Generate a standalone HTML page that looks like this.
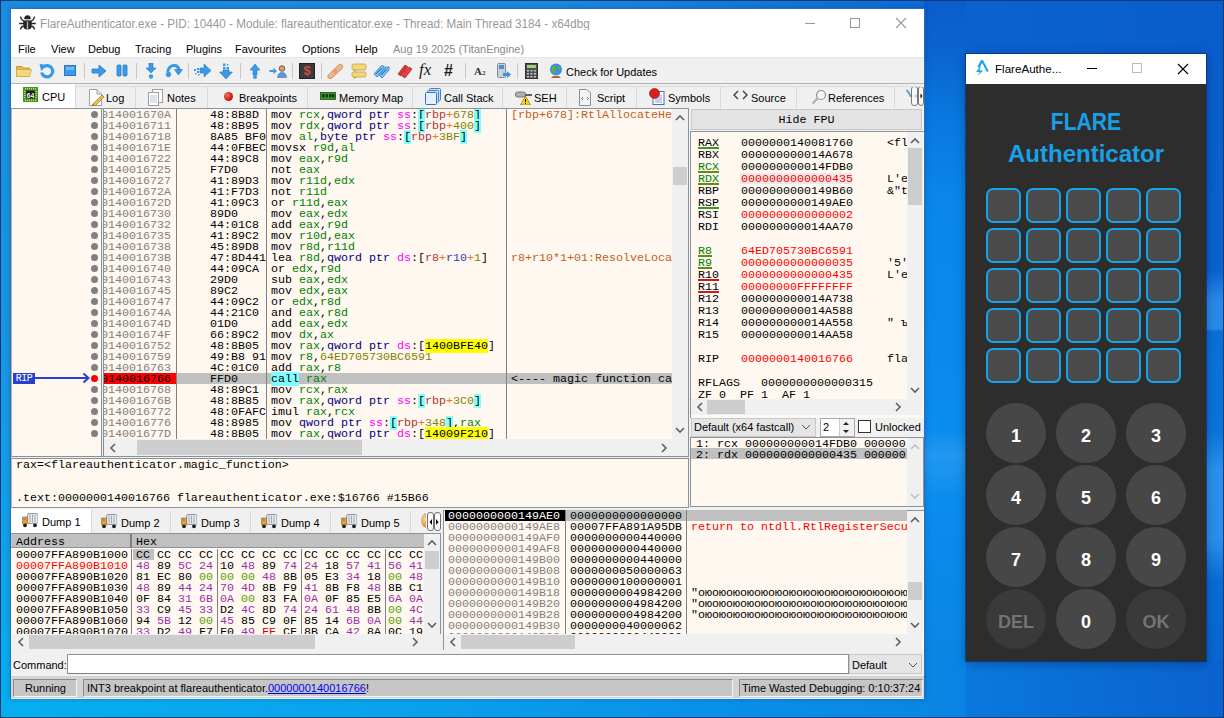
<!DOCTYPE html><html><head><meta charset="utf-8"><style>
*{margin:0;padding:0;box-sizing:border-box}
html,body{width:1224px;height:718px;overflow:hidden}
body{position:relative;background:#1479dc;font-family:"Liberation Sans",sans-serif;font-size:11px;color:#000}
.a{position:absolute}
.m{font-family:"Liberation Mono",monospace;font-size:11.67px;white-space:pre;line-height:11px}
.u{font-family:"Liberation Sans",sans-serif;font-size:11px;white-space:pre}
.row{position:absolute;left:0;height:11px;white-space:pre}
</style></head><body>
<div class="a" style="left:0;top:0;width:1224px;height:718px;background:
linear-gradient(180deg, #0a5ccc 0px, #0a64d2 50px, #0a78e0 120px, #0a86ea 200px, #0a8cee 430px, #2298f0 455px, #0a8cee 500px, #0a86e8 640px, #0a78e0 718px)"></div>
<div class="a" style="left:1206px;top:0;width:18px;height:718px;background:
linear-gradient(180deg, #0a5ccc 0px, #0a62d0 270px, #2a88e8 300px, #2a8ae8 329px, #0a70d8 331px, #0a74da 430px, #2a90ec 470px, #2a8eea 540px, #0a6cd6 580px, #0a60d0 718px)"></div>
<div class="a" style="left:966px;top:0;width:240px;height:54px;background:linear-gradient(90deg,#0a62d0,#0a5ccc)"></div>
<div class="a" style="left:966px;top:661px;width:258px;height:57px;background:linear-gradient(90deg,#0a78e0 0%,#0a6cd6 50%,#0a62d0 100%)"></div>
<div class="a" style="left:0;top:0;width:924px;height:10px;background:linear-gradient(90deg,#1a8ee2 0%,#1a8ae0 60%,#0e6ad4 100%)"></div>
<div class="a" style="left:0;top:0;width:11px;height:718px;background:linear-gradient(180deg,#1a8ce0 0%,#1896e6 50%,#08aef0 100%)"></div>
<div class="a" style="left:0;top:640px;width:966px;height:78px;background:linear-gradient(90deg,#06aef0 0%,#0aa4ee 35%,#0a92ea 70%,#0a84e4 100%)"></div>
<div class="a" style="left:0;top:0;width:1224px;height:718px;box-shadow:inset 0 0 0 1px #0a3c78"></div>
<div class="a" style="left:10px;top:8px;width:915px;height:691px;background:#f0f0f0;border:1px solid #2a70c0;box-shadow:0 0 5px rgba(0,30,80,0.25)"></div>
<div class="a" style="left:11px;top:9px;width:913px;height:29px;background:#fff"></div>
<div class="a u" style="left:40px;top:16px;font-size:11.7px;color:#999;transform:scaleY(1.1);transform-origin:0 3px">FlareAuthenticator.exe - PID: 10440 - Module: flareauthenticator.exe - Thread: Main Thread 3184 - x64dbg</div>
<svg class="a" style="left:19px;top:15px" width="17" height="15" viewBox="0 0 17 15"><g fill="#262626" stroke="#262626">
<path d="M5.2 4.2 Q5 0.5 8.5 0.2 Q12 0.5 11.8 4.2 Z" stroke="none"/>
<path d="M4.2 6.5 Q4.2 5.2 8.5 5.2 Q12.8 5.2 12.8 6.5 L12.6 12 Q12 14.5 8.5 14.5 Q5 14.5 4.4 12 Z" stroke="none"/>
<path d="M4.8 6 Q2 5 1.5 1.5 M12.2 6 Q15 5 15.5 1.5 M0.2 8.5 H16.8 M4.8 11 Q2 11.5 1.5 14.5 M12.2 11 Q15 11.5 15.5 14.5" fill="none" stroke-width="1.3"/>
<rect x="7.8" y="6.5" width="1.4" height="7.5" fill="#b8b8b8" stroke="none"/></g></svg>
<div class="a" style="left:805px;top:23px;width:10px;height:1px;background:#999"></div>
<div class="a" style="left:850px;top:18px;width:10px;height:10px;border:1px solid #999"></div>
<svg class="a" style="left:895px;top:17px" width="12" height="12"><path d="M1 1 L11 11 M11 1 L1 11" stroke="#999" stroke-width="1.1"/></svg>
<div class="a" style="left:11px;top:38px;width:913px;height:19px;background:#fff"></div>
<div class="a u" style="left:18px;top:43px">File</div>
<div class="a u" style="left:51px;top:43px">View</div>
<div class="a u" style="left:88px;top:43px">Debug</div>
<div class="a u" style="left:135px;top:43px">Tracing</div>
<div class="a u" style="left:186px;top:43px">Plugins</div>
<div class="a u" style="left:235px;top:43px">Favourites</div>
<div class="a u" style="left:302px;top:43px">Options</div>
<div class="a u" style="left:355px;top:43px">Help</div>
<div class="a u" style="left:393px;top:43px;color:#888">Aug 19 2025 (TitanEngine)</div>
<div class="a" style="left:11px;top:57px;width:913px;height:1px;background:#e6e6e6"></div>
<div class="a" style="left:11px;top:58px;width:913px;height:25px;background:#f0f0f0"></div>
<div class="a" style="left:11px;top:83px;width:913px;height:1px;background:#b4b4b4"></div>
<div class="a u" style="left:566px;top:66px">Check for Updates</div>
<svg class="a" style="left:16px;top:63px" width="16" height="16" viewBox="0 0 16 16"><path d="M0.5 3.5 H6 L7.5 5 H13.5 V13.5 H0.5 Z" fill="#e8b84a" stroke="#c89a30"/><path d="M0.5 6.5 H15.5 L13.5 13.5 H0.5 Z" fill="#f7d77a" stroke="#d0a84a" stroke-width="0.8"/></svg>
<svg class="a" style="left:39px;top:63px" width="16" height="16" viewBox="0 0 16 16"><path d="M4.2 4.2 A5.6 5.6 0 1 1 2.6 9.5" fill="none" stroke="#3a9ae6" stroke-width="3.2"/><path d="M0.5 0.8 L8 2.2 L2.2 8 Z" fill="#3a9ae6"/></svg>
<svg class="a" style="left:63px;top:63px" width="16" height="16" viewBox="0 0 16 16"><rect x="1.5" y="2.5" width="11" height="10" fill="#3a9ae6" stroke="#2a78c8"/><rect x="3" y="4" width="8" height="3" fill="#8cc8f5" opacity="0.7"/></svg>
<div class="a" style="left:84px;top:63px;width:1px;height:16px;background:#c8c8c8"></div>
<svg class="a" style="left:91px;top:63px" width="16" height="16" viewBox="0 0 16 16"><path d="M1 6 H8 V2 L15 8 L8 14 V10 H1 Z" fill="#3a9ae6" stroke="#2a78c8" stroke-width="0.8"/></svg>
<svg class="a" style="left:115px;top:63px" width="14" height="16" viewBox="0 0 14 16"><rect x="2" y="2" width="4" height="11" rx="1" fill="#3a9ae6" stroke="#2a78c8" stroke-width="0.8"/><rect x="8" y="2" width="4" height="11" rx="1" fill="#3a9ae6" stroke="#2a78c8" stroke-width="0.8"/></svg>
<div class="a" style="left:136px;top:63px;width:1px;height:16px;background:#c8c8c8"></div>
<svg class="a" style="left:143px;top:63px" width="16" height="16" viewBox="0 0 16 16"><path d="M6 0 H10 V5 H13 L8 10 L3 5 H6 Z" fill="#3a9ae6" stroke="#2a78c8" stroke-width="0.6"/><circle cx="8" cy="13.5" r="2.2" fill="#3a9ae6"/></svg>
<svg class="a" style="left:165px;top:63px" width="18" height="16" viewBox="0 0 18 16"><path d="M2.5 9 Q4 2 10 2.5 Q13.5 3 14 7" fill="none" stroke="#3a9ae6" stroke-width="3"/><path d="M9.5 6.5 H17.5 L13.5 12 Z" fill="#3a9ae6" stroke="#2a78c8" stroke-width="0.6"/><circle cx="3.5" cy="11.5" r="2.4" fill="#3a9ae6" stroke="#2a78c8" stroke-width="0.5"/></svg>
<div class="a" style="left:188px;top:63px;width:1px;height:16px;background:#c8c8c8"></div>
<svg class="a" style="left:194px;top:63px" width="18" height="16" viewBox="0 0 18 16"><path d="M6 5 H10 V1 L17 7.5 L10 14 V10 H6 Z" fill="#3a9ae6" stroke="#2a78c8" stroke-width="0.6"/><g fill="#3a9ae6"><rect x="3" y="5" width="2" height="2"/><rect x="3" y="8" width="2" height="2"/><rect x="0" y="6" width="2" height="2"/><rect x="1" y="10" width="1.5" height="1.5"/><rect x="4" y="11" width="1.5" height="1.5"/></g></svg>
<svg class="a" style="left:218px;top:63px" width="16" height="17" viewBox="0 0 16 17"><path d="M5 7 V9 H1.5 L8 16 L14.5 9 H11 V7 Z" fill="#3a9ae6" stroke="#2a78c8" stroke-width="0.6"/><g fill="#3a9ae6"><rect x="5" y="4" width="2.5" height="2.5"/><rect x="8.5" y="4" width="2.5" height="2.5"/><rect x="5" y="0.5" width="2.5" height="2.5"/><rect x="9" y="1" width="1.5" height="1.5"/></g></svg>
<div class="a" style="left:240px;top:63px;width:1px;height:16px;background:#c8c8c8"></div>
<svg class="a" style="left:247px;top:63px" width="16" height="16" viewBox="0 0 16 16"><path d="M6 12 V7 H3 L8 1 L13 7 H10 V12 Z" fill="#3a9ae6" stroke="#2a78c8" stroke-width="0.6"/><circle cx="8" cy="14" r="2" fill="#3a9ae6"/></svg>
<svg class="a" style="left:269px;top:63px" width="18" height="16" viewBox="0 0 18 16"><path d="M0.5 7 H4.5 V4.8 L8 8 L4.5 11.2 V9 H0.5 Z" fill="#3a9ae6"/><circle cx="13" cy="5.5" r="2.8" fill="#d8a070" stroke="#604020" stroke-width="0.8"/><path d="M8.5 14.5 Q9 9.5 13 9.5 Q17 9.5 17.5 14.5 Z" fill="#5a9ae0" stroke="#3a70b0" stroke-width="0.6"/></svg>
<div class="a" style="left:292px;top:63px;width:1px;height:16px;background:#c8c8c8"></div>
<div class="a" style="left:299px;top:63px;width:16px;height:16px;background:#3a3a3a;border:1px solid #222"></div>
<div class="a" style="left:299px;top:63px;width:16px;height:16px;color:#d04848;font:bold 13px 'Liberation Sans';line-height:16px;text-align:center">$</div>
<div class="a" style="left:321px;top:63px;width:1px;height:16px;background:#c8c8c8"></div>
<svg class="a" style="left:327px;top:63px" width="17" height="16" viewBox="0 0 17 16"><path d="M1.5 12 L11.5 2 Q13.5 0.5 15 2 Q16.5 3.5 15 5.5 L5 15 Q3 16.5 1.5 15 Q0 13.5 1.5 12 Z" fill="#f0b888" stroke="#c08050" stroke-width="0.8"/><rect x="6" y="6" width="5" height="5" transform="rotate(45 8.5 8.5)" fill="#e8a070"/></svg>
<svg class="a" style="left:351px;top:63px" width="16" height="16" viewBox="0 0 16 16"><rect x="1" y="1" width="14" height="6" rx="1.5" fill="#f5d878" stroke="#c0a040" stroke-width="0.8"/><rect x="1" y="9" width="14" height="5" rx="1.5" fill="#f5d878" stroke="#c0a040" stroke-width="0.8"/><path d="M3 7 L3 9 L6 7 Z" fill="#c0a040"/><path d="M3 14 L3 16 L6 14 Z" fill="#c0a040"/></svg>
<svg class="a" style="left:373px;top:63px" width="17" height="16" viewBox="0 0 17 16"><path d="M1 11 L8 3 L11 3 L11 6 L4 14 Z" fill="#8cc8f5" stroke="#3a7ac0" stroke-width="0.9"/><path d="M6 12 L13 4 L16 4 L16 7 L9 15 Z" fill="#8cc8f5" stroke="#3a7ac0" stroke-width="0.9"/><path d="M3 11 L9 5 M8 12 L14 6" stroke="#2a80d0" stroke-width="1.2"/></svg>
<svg class="a" style="left:397px;top:63px" width="17" height="16" viewBox="0 0 17 16"><path d="M1 11 L8 2 L11 4 L4 13 Z" fill="#e03030" stroke="#a01818" stroke-width="0.7"/><path d="M5 13 L12 4 L15 6 L8 15 Z" fill="#e84040" stroke="#a01818" stroke-width="0.7"/></svg>
<div class="a" style="left:419px;top:61px;font:italic 17px 'Liberation Serif';color:#222;line-height:18px">fx</div>
<div class="a" style="left:444px;top:62px;font:bold 16px 'Liberation Sans';color:#222;line-height:18px">#</div>
<div class="a" style="left:465px;top:63px;width:1px;height:16px;background:#c8c8c8"></div>
<div class="a" style="left:474px;top:64px;font:bold 11px 'Liberation Serif';color:#333;line-height:14px">A<span style="font-size:7px">2</span></div>
<svg class="a" style="left:496px;top:63px" width="16" height="16" viewBox="0 0 16 16"><rect x="1.5" y="0.5" width="8" height="14" rx="1" fill="#c8d0d8" stroke="#707880" stroke-width="0.8"/><rect x="3" y="2" width="5" height="4" fill="#4a90d0"/><path d="M7 10 H11 V8 L15 11.5 L11 15 V13 H7 Z" fill="#3a90e0"/></svg>
<div class="a" style="left:517px;top:63px;width:1px;height:16px;background:#c8c8c8"></div>
<svg class="a" style="left:525px;top:63px" width="13" height="16" viewBox="0 0 13 16"><rect x="0.5" y="0.5" width="12" height="15" fill="#505050" stroke="#303030"/><rect x="2" y="2" width="9" height="3" fill="#a0d080"/><g fill="#c8c8c8"><rect x="2" y="7" width="2" height="1.5"/><rect x="5.5" y="7" width="2" height="1.5"/><rect x="9" y="7" width="2" height="1.5"/><rect x="2" y="10" width="2" height="1.5"/><rect x="5.5" y="10" width="2" height="1.5"/><rect x="9" y="10" width="2" height="1.5"/><rect x="2" y="13" width="2" height="1.5"/><rect x="5.5" y="13" width="2" height="1.5"/><rect x="9" y="13" width="2" height="1.5"/></g></svg>
<svg class="a" style="left:548px;top:63px" width="16" height="16" viewBox="0 0 16 16"><circle cx="8" cy="6.5" r="6" fill="#3a90e0"/><path d="M4 3 Q7 2 8 5 Q6 8 9 10 Q6 11 4 9 Z M10 2 Q13 4 12 7 Q10 6 10 2 Z" fill="#60b040"/><path d="M3 15 H13 L11 13 H5 Z" fill="#c06030"/></svg>
<div class="a" style="left:11px;top:84px;width:913px;height:24px;background:#f0f0f0"></div>
<div class="a" style="left:11px;top:108px;width:678px;height:348px;background:#fff8f0;border-top:1px solid #8c939b;border-right:1px solid #8c939b;border-left:1px solid #b4b4b4"></div>
<div class="a" style="left:104px;top:373px;width:568px;height:11px;background:#c0c0c0"></div>
<div class="a" style="left:104px;top:373px;width:72px;height:11px;background:#ff0000"></div>
<div class="a" style="left:101px;top:109px;width:1px;height:347px;background:#8a9098"></div>
<div class="a" style="left:103px;top:109px;width:1px;height:347px;background:#8a9098"></div>
<div class="a" style="left:176px;top:109px;width:1px;height:330px;background:#808080"></div>
<div class="a" style="left:266px;top:109px;width:1px;height:330px;background:#808080"></div>
<div class="a" style="left:506px;top:109px;width:1px;height:330px;background:#808080"></div>
<div class="a m" style="left:104px;top:109px;width:72px;height:330px;overflow:hidden">
<div class="row" style="top:1px;left:-45px;color:#808080">000000014001670A</div>
<div class="row" style="top:12px;left:-45px;color:#808080">0000000140016711</div>
<div class="row" style="top:23px;left:-45px;color:#808080">0000000140016718</div>
<div class="row" style="top:34px;left:-45px;color:#808080">000000014001671E</div>
<div class="row" style="top:45px;left:-45px;color:#808080">0000000140016722</div>
<div class="row" style="top:56px;left:-45px;color:#808080">0000000140016725</div>
<div class="row" style="top:67px;left:-45px;color:#808080">0000000140016727</div>
<div class="row" style="top:78px;left:-45px;color:#808080">000000014001672A</div>
<div class="row" style="top:89px;left:-45px;color:#808080">000000014001672D</div>
<div class="row" style="top:100px;left:-45px;color:#808080">0000000140016730</div>
<div class="row" style="top:111px;left:-45px;color:#808080">0000000140016732</div>
<div class="row" style="top:122px;left:-45px;color:#808080">0000000140016735</div>
<div class="row" style="top:133px;left:-45px;color:#808080">0000000140016738</div>
<div class="row" style="top:144px;left:-45px;color:#808080">000000014001673B</div>
<div class="row" style="top:155px;left:-45px;color:#808080">0000000140016740</div>
<div class="row" style="top:166px;left:-45px;color:#808080">0000000140016743</div>
<div class="row" style="top:177px;left:-45px;color:#808080">0000000140016745</div>
<div class="row" style="top:188px;left:-45px;color:#808080">0000000140016747</div>
<div class="row" style="top:199px;left:-45px;color:#808080">000000014001674A</div>
<div class="row" style="top:210px;left:-45px;color:#808080">000000014001674D</div>
<div class="row" style="top:221px;left:-45px;color:#808080">000000014001674F</div>
<div class="row" style="top:232px;left:-45px;color:#808080">0000000140016752</div>
<div class="row" style="top:243px;left:-45px;color:#808080">0000000140016759</div>
<div class="row" style="top:254px;left:-45px;color:#808080">0000000140016763</div>
<div class="row" style="top:265px;left:-45px;color:#000">0000000140016766</div>
<div class="row" style="top:276px;left:-45px;color:#808080">0000000140016768</div>
<div class="row" style="top:287px;left:-45px;color:#808080">000000014001676B</div>
<div class="row" style="top:298px;left:-45px;color:#808080">0000000140016772</div>
<div class="row" style="top:309px;left:-45px;color:#808080">0000000140016776</div>
<div class="row" style="top:320px;left:-45px;color:#808080">000000014001677D</div>
</div>
<div class="a m" style="left:177px;top:109px;width:89px;height:330px;overflow:hidden">
<div class="row" style="top:1px;left:33px">48:8B8D</div>
<div class="row" style="top:12px;left:33px">48:8B95 (</div>
<div class="row" style="top:23px;left:33px">8A85 BF05</div>
<div class="row" style="top:34px;left:33px">44:0FBEC8</div>
<div class="row" style="top:45px;left:33px">44:89C8</div>
<div class="row" style="top:56px;left:33px">F7D0</div>
<div class="row" style="top:67px;left:33px">41:89D3</div>
<div class="row" style="top:78px;left:33px">41:F7D3</div>
<div class="row" style="top:89px;left:33px">41:09C3</div>
<div class="row" style="top:100px;left:33px">89D0</div>
<div class="row" style="top:111px;left:33px">44:01C8</div>
<div class="row" style="top:122px;left:33px">41:89C2</div>
<div class="row" style="top:133px;left:33px">45:89D8</div>
<div class="row" style="top:144px;left:33px">47:8D4410</div>
<div class="row" style="top:155px;left:33px">44:09CA</div>
<div class="row" style="top:166px;left:33px">29D0</div>
<div class="row" style="top:177px;left:33px">89C2</div>
<div class="row" style="top:188px;left:33px">44:09C2</div>
<div class="row" style="top:199px;left:33px">44:21C0</div>
<div class="row" style="top:210px;left:33px">01D0</div>
<div class="row" style="top:221px;left:33px">66:89C2</div>
<div class="row" style="top:232px;left:33px">48:8B05</div>
<div class="row" style="top:243px;left:33px">49:B8 91</div>
<div class="row" style="top:254px;left:33px">4C:01C0</div>
<div class="row" style="top:265px;left:33px">FFD0</div>
<div class="row" style="top:276px;left:33px">48:89C1</div>
<div class="row" style="top:287px;left:33px">48:8B85 (</div>
<div class="row" style="top:298px;left:33px">48:0FAFC1</div>
<div class="row" style="top:309px;left:33px">48:8985</div>
<div class="row" style="top:320px;left:33px">48:8B05</div>
</div>
<div class="a m" style="left:267px;top:109px;width:239px;height:330px;overflow:hidden">
<div class="row" style="top:1px;left:4px">mov <span style="color:#008000;">rcx</span>,<span style="color:#000080;">qword ptr </span><span style="color:#ff00ff;">ss</span>:<span style="color:#000000;background:#80ffff;">[</span><span style="color:#b03434;">rbp</span><span style="color:#f27711;">+</span><span style="color:#828200;">678</span><span style="color:#000000;background:#80ffff;">]</span></div>
<div class="row" style="top:12px;left:4px">mov <span style="color:#008000;">rdx</span>,<span style="color:#000080;">qword ptr </span><span style="color:#ff00ff;">ss</span>:<span style="color:#000000;background:#80ffff;">[</span><span style="color:#b03434;">rbp</span><span style="color:#f27711;">+</span><span style="color:#828200;">400</span><span style="color:#000000;background:#80ffff;">]</span></div>
<div class="row" style="top:23px;left:4px">mov <span style="color:#008000;">al</span>,<span style="color:#000080;">byte ptr </span><span style="color:#ff00ff;">ss</span>:<span style="color:#000000;background:#80ffff;">[</span><span style="color:#b03434;">rbp</span><span style="color:#f27711;">+</span><span style="color:#828200;">3BF</span><span style="color:#000000;background:#80ffff;">]</span></div>
<div class="row" style="top:34px;left:4px">movsx <span style="color:#008000;">r9d</span>,<span style="color:#008000;">al</span></div>
<div class="row" style="top:45px;left:4px">mov <span style="color:#008000;">eax</span>,<span style="color:#008000;">r9d</span></div>
<div class="row" style="top:56px;left:4px">not <span style="color:#008000;">eax</span></div>
<div class="row" style="top:67px;left:4px">mov <span style="color:#008000;">r11d</span>,<span style="color:#008000;">edx</span></div>
<div class="row" style="top:78px;left:4px">not <span style="color:#008000;">r11d</span></div>
<div class="row" style="top:89px;left:4px">or <span style="color:#008000;">r11d</span>,<span style="color:#008000;">eax</span></div>
<div class="row" style="top:100px;left:4px">mov <span style="color:#008000;">eax</span>,<span style="color:#008000;">edx</span></div>
<div class="row" style="top:111px;left:4px">add <span style="color:#008000;">eax</span>,<span style="color:#008000;">r9d</span></div>
<div class="row" style="top:122px;left:4px">mov <span style="color:#008000;">r10d</span>,<span style="color:#008000;">eax</span></div>
<div class="row" style="top:133px;left:4px">mov <span style="color:#008000;">r8d</span>,<span style="color:#008000;">r11d</span></div>
<div class="row" style="top:144px;left:4px">lea <span style="color:#008000;">r8d</span>,<span style="color:#000080;">qword ptr </span><span style="color:#ff00ff;">ds</span>:<span style="color:#000000;">[</span><span style="color:#b03434;">r8</span><span style="color:#f27711;">+</span><span style="color:#3838bc;">r10</span><span style="color:#f27711;">+</span><span style="color:#828200;">1</span><span style="color:#000000;">]</span></div>
<div class="row" style="top:155px;left:4px">or <span style="color:#008000;">edx</span>,<span style="color:#008000;">r9d</span></div>
<div class="row" style="top:166px;left:4px">sub <span style="color:#008000;">eax</span>,<span style="color:#008000;">edx</span></div>
<div class="row" style="top:177px;left:4px">mov <span style="color:#008000;">edx</span>,<span style="color:#008000;">eax</span></div>
<div class="row" style="top:188px;left:4px">or <span style="color:#008000;">edx</span>,<span style="color:#008000;">r8d</span></div>
<div class="row" style="top:199px;left:4px">and <span style="color:#008000;">eax</span>,<span style="color:#008000;">r8d</span></div>
<div class="row" style="top:210px;left:4px">add <span style="color:#008000;">eax</span>,<span style="color:#008000;">edx</span></div>
<div class="row" style="top:221px;left:4px">mov <span style="color:#008000;">dx</span>,<span style="color:#008000;">ax</span></div>
<div class="row" style="top:232px;left:4px">mov <span style="color:#008000;">rax</span>,<span style="color:#000080;">qword ptr </span><span style="color:#ff00ff;">ds</span>:<span style="color:#000000;">[</span><span style="color:#000;background:#ffff00;">1400BFE40</span><span style="color:#000000;">]</span></div>
<div class="row" style="top:243px;left:4px">mov <span style="color:#008000;">r8</span>,<span style="color:#828200;">64ED705730BC6591</span></div>
<div class="row" style="top:254px;left:4px">add <span style="color:#008000;">rax</span>,<span style="color:#008000;">r8</span></div>
<div class="row" style="top:265px;left:4px"><span style="color:#000;background:#80ffff;">call</span> <span style="color:#008000;">rax</span></div>
<div class="row" style="top:276px;left:4px">mov <span style="color:#008000;">rcx</span>,<span style="color:#008000;">rax</span></div>
<div class="row" style="top:287px;left:4px">mov <span style="color:#008000;">rax</span>,<span style="color:#000080;">qword ptr </span><span style="color:#ff00ff;">ss</span>:<span style="color:#000000;background:#80ffff;">[</span><span style="color:#b03434;">rbp</span><span style="color:#f27711;">+</span><span style="color:#828200;">3C0</span><span style="color:#000000;background:#80ffff;">]</span></div>
<div class="row" style="top:298px;left:4px">imul <span style="color:#008000;">rax</span>,<span style="color:#008000;">rcx</span></div>
<div class="row" style="top:309px;left:4px">mov <span style="color:#000080;">qword ptr </span><span style="color:#ff00ff;">ss</span>:<span style="color:#000000;background:#80ffff;">[</span><span style="color:#b03434;">rbp</span><span style="color:#f27711;">+</span><span style="color:#828200;">348</span><span style="color:#000000;background:#80ffff;">]</span>,<span style="color:#008000;">rax</span></div>
<div class="row" style="top:320px;left:4px">mov <span style="color:#008000;">rax</span>,<span style="color:#000080;">qword ptr </span><span style="color:#ff00ff;">ds</span>:<span style="color:#000000;">[</span><span style="color:#000;background:#ffff00;">14009F210</span><span style="color:#000000;">]</span></div>
</div>
<div class="a m" style="left:507px;top:109px;width:165px;height:330px;overflow:hidden">
<div class="row" style="top:1px;left:4px;color:#c0601e">[rbp+678]:RtlAllocateHe</div>
<div class="row" style="top:144px;left:4px;color:#c0601e">r8+r10*1+01:ResolveLoca</div>
<div class="row" style="top:265px;left:4px;color:#000">&lt;---- magic function ca</div>
</div>
<div class="a" style="left:91px;top:111px;width:7px;height:7px;border-radius:50%;background:#808080"></div>
<div class="a" style="left:91px;top:122px;width:7px;height:7px;border-radius:50%;background:#808080"></div>
<div class="a" style="left:91px;top:133px;width:7px;height:7px;border-radius:50%;background:#808080"></div>
<div class="a" style="left:91px;top:144px;width:7px;height:7px;border-radius:50%;background:#808080"></div>
<div class="a" style="left:91px;top:155px;width:7px;height:7px;border-radius:50%;background:#808080"></div>
<div class="a" style="left:91px;top:166px;width:7px;height:7px;border-radius:50%;background:#808080"></div>
<div class="a" style="left:91px;top:177px;width:7px;height:7px;border-radius:50%;background:#808080"></div>
<div class="a" style="left:91px;top:188px;width:7px;height:7px;border-radius:50%;background:#808080"></div>
<div class="a" style="left:91px;top:199px;width:7px;height:7px;border-radius:50%;background:#808080"></div>
<div class="a" style="left:91px;top:210px;width:7px;height:7px;border-radius:50%;background:#808080"></div>
<div class="a" style="left:91px;top:221px;width:7px;height:7px;border-radius:50%;background:#808080"></div>
<div class="a" style="left:91px;top:232px;width:7px;height:7px;border-radius:50%;background:#808080"></div>
<div class="a" style="left:91px;top:243px;width:7px;height:7px;border-radius:50%;background:#808080"></div>
<div class="a" style="left:91px;top:254px;width:7px;height:7px;border-radius:50%;background:#808080"></div>
<div class="a" style="left:91px;top:265px;width:7px;height:7px;border-radius:50%;background:#808080"></div>
<div class="a" style="left:91px;top:276px;width:7px;height:7px;border-radius:50%;background:#808080"></div>
<div class="a" style="left:91px;top:287px;width:7px;height:7px;border-radius:50%;background:#808080"></div>
<div class="a" style="left:91px;top:298px;width:7px;height:7px;border-radius:50%;background:#808080"></div>
<div class="a" style="left:91px;top:309px;width:7px;height:7px;border-radius:50%;background:#808080"></div>
<div class="a" style="left:91px;top:320px;width:7px;height:7px;border-radius:50%;background:#808080"></div>
<div class="a" style="left:91px;top:331px;width:7px;height:7px;border-radius:50%;background:#808080"></div>
<div class="a" style="left:91px;top:342px;width:7px;height:7px;border-radius:50%;background:#808080"></div>
<div class="a" style="left:91px;top:353px;width:7px;height:7px;border-radius:50%;background:#808080"></div>
<div class="a" style="left:91px;top:364px;width:7px;height:7px;border-radius:50%;background:#808080"></div>
<div class="a" style="left:91px;top:375px;width:7px;height:7px;border-radius:50%;background:#ff0000"></div>
<div class="a" style="left:91px;top:386px;width:7px;height:7px;border-radius:50%;background:#808080"></div>
<div class="a" style="left:91px;top:397px;width:7px;height:7px;border-radius:50%;background:#808080"></div>
<div class="a" style="left:91px;top:408px;width:7px;height:7px;border-radius:50%;background:#808080"></div>
<div class="a" style="left:91px;top:419px;width:7px;height:7px;border-radius:50%;background:#808080"></div>
<div class="a" style="left:91px;top:430px;width:7px;height:7px;border-radius:50%;background:#808080"></div>
<div class="a m" style="left:13px;top:373px;width:22px;height:11px;background:#2a3fcf;color:#fff;font-size:10px;line-height:11px;text-align:center;letter-spacing:-0.5px">RIP</div>
<div class="a" style="left:35px;top:377px;width:53px;height:2px;background:#2a3fcf"></div>
<svg class="a" style="left:82px;top:372px" width="8" height="12"><path d="M1.5 1.5 L6.5 6 L1.5 10.5" fill="none" stroke="#2a3fcf" stroke-width="2"/></svg>
<div class="a" style="left:672px;top:109px;width:16px;height:330px;background:#f0f0f0"></div>
<div class="a" style="left:673px;top:167px;width:14px;height:18px;background:#cdcdcd"></div>
<svg class="a" style="left:675px;top:114px" width="10" height="8"><path d="M1 6 L5 2 L9 6" fill="none" stroke="#606060" stroke-width="1.6"/></svg>
<svg class="a" style="left:675px;top:426px" width="10" height="8"><path d="M1 2 L5 6 L9 2" fill="none" stroke="#606060" stroke-width="1.6"/></svg>
<div class="a" style="left:104px;top:439px;width:584px;height:17px;background:#f0f0f0"></div>
<div class="a" style="left:137px;top:440px;width:225px;height:15px;background:#cdcdcd"></div>
<svg class="a" style="left:109px;top:443px" width="8" height="10"><path d="M6 1 L2 5 L6 9" fill="none" stroke="#606060" stroke-width="1.6"/></svg>
<svg class="a" style="left:660px;top:443px" width="8" height="10"><path d="M2 1 L6 5 L2 9" fill="none" stroke="#606060" stroke-width="1.6"/></svg>
<div class="a" style="left:11px;top:456px;width:678px;height:1px;background:#8a9098"></div>
<div class="a" style="left:102px;top:109px;width:1px;height:347px;background:#f0f0f0"></div>
<div class="a" style="left:691px;top:109px;width:231px;height:21px;background:#e3e3e3;border:1px solid #c8c8c8"></div>
<div class="a m" style="left:691px;top:110px;width:231px;height:21px;line-height:21px;text-align:center">Hide FPU</div>
<div class="a" style="left:690px;top:131px;width:234px;height:287px;background:#fff8f0;border-top:1px solid #8c939b;border-left:1px solid #8c939b"></div>
<div class="a" style="left:11px;top:458px;width:678px;height:50px;background:#fff8f0;border-top:1px solid #8a9098;border-right:1px solid #8c939b;border-bottom:1px solid #8c939b;border-left:1px solid #b4b4b4"></div>
<div class="a" style="left:11px;top:457px;width:678px;height:1px;background:#f0f0f0"></div>
<div class="a" style="left:690px;top:437px;width:234px;height:70px;background:#fff8f0;border:1px solid #8c939b"></div>
<div class="a" style="left:11px;top:533px;width:430px;height:117px;background:#fff8f0;border-top:1px solid #8c939b;border-right:1px solid #8c939b"></div>
<div class="a" style="left:443px;top:510px;width:481px;height:140px;background:#fff8f0;border-top:1px solid #8c939b;border-left:1px solid #8c939b"></div>
<div class="a" style="left:135px;top:86px;width:1px;height:22px;background:#d9d9d9"></div>
<div class="a" style="left:207px;top:86px;width:1px;height:22px;background:#d9d9d9"></div>
<div class="a" style="left:307px;top:86px;width:1px;height:22px;background:#d9d9d9"></div>
<div class="a" style="left:412px;top:86px;width:1px;height:22px;background:#d9d9d9"></div>
<div class="a" style="left:502px;top:86px;width:1px;height:22px;background:#d9d9d9"></div>
<div class="a" style="left:566px;top:86px;width:1px;height:22px;background:#d9d9d9"></div>
<div class="a" style="left:636px;top:86px;width:1px;height:22px;background:#d9d9d9"></div>
<div class="a" style="left:720px;top:86px;width:1px;height:22px;background:#d9d9d9"></div>
<div class="a" style="left:796px;top:86px;width:1px;height:22px;background:#d9d9d9"></div>
<div class="a" style="left:894px;top:86px;width:1px;height:22px;background:#d9d9d9"></div>
<div class="a" style="left:11px;top:84px;width:65px;height:24px;background:#fff;border-right:1px solid #d9d9d9"></div>
<svg class="a" style="left:23px;top:87px" width="15" height="15" viewBox="0 0 15 15"><rect x="0" y="0" width="15" height="15" fill="#3a9a28"/><g fill="#e8d050"><rect x="2" y="1" width="1" height="1.5"/><rect x="4" y="1" width="1" height="1.5"/><rect x="6" y="1" width="1" height="1.5"/><rect x="8" y="1" width="1" height="1.5"/><rect x="10" y="1" width="1" height="1.5"/><rect x="12" y="1" width="1" height="1.5"/><rect x="2" y="12.5" width="1" height="1.5"/><rect x="4" y="12.5" width="1" height="1.5"/><rect x="6" y="12.5" width="1" height="1.5"/><rect x="8" y="12.5" width="1" height="1.5"/><rect x="10" y="12.5" width="1" height="1.5"/><rect x="12" y="12.5" width="1" height="1.5"/><rect x="1" y="4" width="1.5" height="1"/><rect x="1" y="6" width="1.5" height="1"/><rect x="1" y="8" width="1.5" height="1"/><rect x="1" y="10" width="1.5" height="1"/><rect x="12.5" y="4" width="1.5" height="1"/><rect x="12.5" y="6" width="1.5" height="1"/><rect x="12.5" y="8" width="1.5" height="1"/><rect x="12.5" y="10" width="1.5" height="1"/></g><rect x="3" y="3.5" width="9" height="8" rx="1" fill="#1e1e1e"/><text x="7.5" y="10.5" font-family="Liberation Sans" font-weight="bold" font-size="7" fill="#f0f0f0" text-anchor="middle">64</text></svg>
<div class="a u" style="left:42px;top:91px">CPU</div>
<div class="a u" style="left:106px;top:92px">Log</div>
<div class="a u" style="left:167px;top:92px">Notes</div>
<div class="a u" style="left:239px;top:92px">Breakpoints</div>
<div class="a u" style="left:339px;top:92px">Memory Map</div>
<div class="a u" style="left:444px;top:92px">Call Stack</div>
<div class="a u" style="left:534px;top:92px">SEH</div>
<div class="a u" style="left:597px;top:92px">Script</div>
<div class="a u" style="left:668px;top:92px">Symbols</div>
<div class="a u" style="left:751px;top:92px">Source</div>
<div class="a u" style="left:828px;top:92px">References</div>
<svg class="a" style="left:88px;top:89px" width="16" height="17" viewBox="0 0 16 17"><path d="M1.5 0.5 H9 L13.5 5 V16.5 H1.5 Z" fill="#fff" stroke="#9aa0a8"/><path d="M9 0.5 V5 H13.5" fill="#e8e8e8" stroke="#9aa0a8"/><path d="M5 15 L14 6 L16 8 L7 17 L4 17 Z" fill="#f0c040" stroke="#806020" stroke-width="0.6"/><path d="M4 17 L5 15 L6.5 16.5 Z" fill="#d03030"/></svg>
<svg class="a" style="left:148px;top:89px" width="16" height="17" viewBox="0 0 16 17"><rect x="4.5" y="0.5" width="10" height="13" fill="#fff" stroke="#9aa0a8"/><rect x="0.5" y="3.5" width="10" height="13" fill="#fff" stroke="#9aa0a8"/><g stroke="#a8b8c8" stroke-width="0.8"><path d="M2 7 H9 M2 9 H9 M2 11 H9 M2 13 H9"/></g></svg>
<div class="a" style="left:224px;top:92px;width:9px;height:9px;border-radius:50%;background:radial-gradient(circle at 35% 35%,#f07060,#c82010 60%,#901000)"></div>
<svg class="a" style="left:320px;top:92px" width="16" height="9" viewBox="0 0 16 9"><rect x="0.5" y="0.5" width="15" height="7" fill="#3a9a30" stroke="#1a5010" stroke-width="0.8"/><g fill="#1a3a10"><rect x="2" y="2" width="2.5" height="3.5"/><rect x="5.5" y="2" width="2.5" height="3.5"/><rect x="9" y="2" width="2.5" height="3.5"/><rect x="12" y="2" width="2.5" height="3.5"/></g></svg>
<svg class="a" style="left:425px;top:88px" width="16" height="17" viewBox="0 0 16 17"><rect x="4.5" y="0.5" width="11" height="12" rx="1" fill="#c8e0f8" stroke="#4a80c0"/><rect x="2.5" y="2.5" width="11" height="12" rx="1" fill="#c8e0f8" stroke="#4a80c0"/><rect x="0.5" y="4.5" width="11" height="12" rx="1" fill="#e0f0ff" stroke="#3a70b0"/></svg>
<svg class="a" style="left:515px;top:90px" width="17" height="15" viewBox="0 0 17 15"><rect x="0.5" y="2" width="10" height="5" rx="2" fill="#b0b0b0" stroke="#606060" stroke-width="0.8"/><path d="M10 5 L17 5" stroke="#606060" stroke-width="2"/><path d="M10.5 6 L15.5 15 H5.5 Z" fill="#f8d020" stroke="#907000" stroke-width="0.7"/><rect x="10" y="9" width="1" height="3" fill="#000"/><rect x="10" y="13" width="1" height="1" fill="#000"/></svg>
<svg class="a" style="left:578px;top:89px" width="14" height="17" viewBox="0 0 14 17"><path d="M1.5 0.5 H9 L12.5 4 V16.5 H1.5 Z" fill="#f4f4f4" stroke="#8a9098"/><path d="M5 8 L3.5 9.5 L5 11 M9 8 L10.5 9.5 L9 11" fill="none" stroke="#606870" stroke-width="0.9"/></svg>
<svg class="a" style="left:649px;top:88px" width="16" height="17" viewBox="0 0 16 17"><rect x="4" y="3.5" width="11" height="13" fill="#fff" stroke="#4a70b0"/><g stroke="#6a90d0" stroke-width="0.8"><path d="M6 8 H13 M6 10 H13 M6 12 H13 M6 14 H13"/></g><circle cx="5.5" cy="5.5" r="5" fill="#d82020" stroke="#901010" stroke-width="0.6"/></svg>
<svg class="a" style="left:733px;top:90px" width="15" height="10" viewBox="0 0 15 10"><path d="M5 1 L1 5 L5 9 M10 1 L14 5 L10 9" fill="none" stroke="#404040" stroke-width="1.4"/></svg>
<svg class="a" style="left:811px;top:89px" width="16" height="16" viewBox="0 0 16 16"><circle cx="10" cy="6" r="4.5" fill="#f4f4f4" stroke="#909090" stroke-width="1.2"/><path d="M7 9 L1.5 14.5" stroke="#b0b0b0" stroke-width="2.4"/></svg>
<div class="a" style="left:897px;top:86px;width:26px;height:21px;background:#f0f0f0"></div>
<svg class="a" style="left:906px;top:89px" width="6" height="10" viewBox="0 0 6 10"><path d="M0.5 1 Q3 3 5 8" stroke="#5aa0e8" stroke-width="2" fill="none"/></svg>
<div class="a" style="left:911px;top:86px;width:7px;height:20px;border:1px solid #7a7a7a;border-radius:3px;background:#f8f8f8"></div>
<div class="a" style="left:918px;top:86px;width:6px;height:20px;border:1px solid #7a7a7a;border-radius:3px;background:#f8f8f8"></div>
<svg class="a" style="left:912px;top:93px" width="12" height="6" viewBox="0 0 12 6"><path d="M4.5 1 L2.5 3 L4.5 5 Z" fill="#b0b0b0"/><path d="M8.5 0.5 L10.5 3 L8.5 5.5 Z" fill="#000"/></svg>
<div class="a" style="left:11px;top:86px;width:912px;height:1px;background:#dcdcdc"></div>
<div class="a" style="left:11px;top:84px;width:65px;height:24px;background:#fff;border-right:1px solid #d9d9d9"></div>
<svg class="a" style="left:23px;top:87px" width="15" height="15" viewBox="0 0 15 15"><rect x="0" y="0" width="15" height="15" fill="#3a9a28"/><g fill="#e8d050"><rect x="2" y="1" width="1" height="1.5"/><rect x="4" y="1" width="1" height="1.5"/><rect x="6" y="1" width="1" height="1.5"/><rect x="8" y="1" width="1" height="1.5"/><rect x="10" y="1" width="1" height="1.5"/><rect x="12" y="1" width="1" height="1.5"/><rect x="2" y="12.5" width="1" height="1.5"/><rect x="4" y="12.5" width="1" height="1.5"/><rect x="6" y="12.5" width="1" height="1.5"/><rect x="8" y="12.5" width="1" height="1.5"/><rect x="10" y="12.5" width="1" height="1.5"/><rect x="12" y="12.5" width="1" height="1.5"/><rect x="1" y="4" width="1.5" height="1"/><rect x="1" y="6" width="1.5" height="1"/><rect x="1" y="8" width="1.5" height="1"/><rect x="1" y="10" width="1.5" height="1"/><rect x="12.5" y="4" width="1.5" height="1"/><rect x="12.5" y="6" width="1.5" height="1"/><rect x="12.5" y="8" width="1.5" height="1"/><rect x="12.5" y="10" width="1.5" height="1"/></g><rect x="3" y="3.5" width="9" height="8" rx="1" fill="#1e1e1e"/><text x="7.5" y="10.5" font-family="Liberation Sans" font-weight="bold" font-size="7" fill="#f0f0f0" text-anchor="middle">64</text></svg>
<div class="a u" style="left:42px;top:91px">CPU</div>
<div class="a" style="left:11px;top:508px;width:430px;height:25px;background:#f0f0f0"></div>
<div class="a" style="left:170px;top:511px;width:1px;height:22px;background:#d9d9d9"></div>
<div class="a" style="left:250px;top:511px;width:1px;height:22px;background:#d9d9d9"></div>
<div class="a" style="left:330px;top:511px;width:1px;height:22px;background:#d9d9d9"></div>
<div class="a" style="left:410px;top:511px;width:1px;height:22px;background:#d9d9d9"></div>
<div class="a" style="left:11px;top:509px;width:81px;height:24px;background:#fff;border-right:1px solid #d9d9d9"></div>
<svg class="a" style="left:22px;top:513px" width="16" height="15" viewBox="0 0 16 15"><rect x="5.5" y="0.5" width="10.5" height="10" rx="1.5" fill="#e8e8ec" stroke="#8890a0" stroke-width="0.9"/><g stroke="#a0a8b8" stroke-width="1"><path d="M8 1.5 V9.5 M10.5 1.5 V9.5 M13 1.5 V9.5"/></g><path d="M0.5 4 H5.5 V11 H0.5 Z" fill="#f0a020" stroke="#b07010" stroke-width="0.7"/><rect x="1.2" y="4.8" width="2.5" height="2.5" fill="#60a0e0"/><circle cx="3" cy="12.3" r="1.9" fill="#202020"/><circle cx="13" cy="12.3" r="1.9" fill="#202020"/></svg>
<div class="a u" style="left:42px;top:516px">Dump 1</div>
<svg class="a" style="left:101px;top:514px" width="16" height="15" viewBox="0 0 16 15"><rect x="5.5" y="0.5" width="10.5" height="10" rx="1.5" fill="#e8e8ec" stroke="#8890a0" stroke-width="0.9"/><g stroke="#a0a8b8" stroke-width="1"><path d="M8 1.5 V9.5 M10.5 1.5 V9.5 M13 1.5 V9.5"/></g><path d="M0.5 4 H5.5 V11 H0.5 Z" fill="#f0a020" stroke="#b07010" stroke-width="0.7"/><rect x="1.2" y="4.8" width="2.5" height="2.5" fill="#60a0e0"/><circle cx="3" cy="12.3" r="1.9" fill="#202020"/><circle cx="13" cy="12.3" r="1.9" fill="#202020"/></svg>
<div class="a u" style="left:121px;top:517px">Dump 2</div>
<svg class="a" style="left:181px;top:514px" width="16" height="15" viewBox="0 0 16 15"><rect x="5.5" y="0.5" width="10.5" height="10" rx="1.5" fill="#e8e8ec" stroke="#8890a0" stroke-width="0.9"/><g stroke="#a0a8b8" stroke-width="1"><path d="M8 1.5 V9.5 M10.5 1.5 V9.5 M13 1.5 V9.5"/></g><path d="M0.5 4 H5.5 V11 H0.5 Z" fill="#f0a020" stroke="#b07010" stroke-width="0.7"/><rect x="1.2" y="4.8" width="2.5" height="2.5" fill="#60a0e0"/><circle cx="3" cy="12.3" r="1.9" fill="#202020"/><circle cx="13" cy="12.3" r="1.9" fill="#202020"/></svg>
<div class="a u" style="left:201px;top:517px">Dump 3</div>
<svg class="a" style="left:261px;top:514px" width="16" height="15" viewBox="0 0 16 15"><rect x="5.5" y="0.5" width="10.5" height="10" rx="1.5" fill="#e8e8ec" stroke="#8890a0" stroke-width="0.9"/><g stroke="#a0a8b8" stroke-width="1"><path d="M8 1.5 V9.5 M10.5 1.5 V9.5 M13 1.5 V9.5"/></g><path d="M0.5 4 H5.5 V11 H0.5 Z" fill="#f0a020" stroke="#b07010" stroke-width="0.7"/><rect x="1.2" y="4.8" width="2.5" height="2.5" fill="#60a0e0"/><circle cx="3" cy="12.3" r="1.9" fill="#202020"/><circle cx="13" cy="12.3" r="1.9" fill="#202020"/></svg>
<div class="a u" style="left:281px;top:517px">Dump 4</div>
<svg class="a" style="left:341px;top:514px" width="16" height="15" viewBox="0 0 16 15"><rect x="5.5" y="0.5" width="10.5" height="10" rx="1.5" fill="#e8e8ec" stroke="#8890a0" stroke-width="0.9"/><g stroke="#a0a8b8" stroke-width="1"><path d="M8 1.5 V9.5 M10.5 1.5 V9.5 M13 1.5 V9.5"/></g><path d="M0.5 4 H5.5 V11 H0.5 Z" fill="#f0a020" stroke="#b07010" stroke-width="0.7"/><rect x="1.2" y="4.8" width="2.5" height="2.5" fill="#60a0e0"/><circle cx="3" cy="12.3" r="1.9" fill="#202020"/><circle cx="13" cy="12.3" r="1.9" fill="#202020"/></svg>
<div class="a u" style="left:361px;top:517px">Dump 5</div>
<div class="a" style="left:421px;top:513px;width:12px;height:15px;border-radius:50%;background:radial-gradient(circle at 40% 40%,#f8d8a0,#d89040 70%)"></div>
<div class="a" style="left:426px;top:511px;width:15px;height:21px;background:#f0f0f0"></div>
<div class="a" style="left:427px;top:512px;width:7px;height:19px;border:1px solid #707070;border-radius:3px;background:#fdfdfd"></div>
<div class="a" style="left:434px;top:512px;width:7px;height:19px;border:1px solid #707070;border-radius:3px;background:#fdfdfd"></div>
<svg class="a" style="left:428px;top:519px" width="12" height="6" viewBox="0 0 12 6"><path d="M4 0 L1.5 3 L4 6 Z M8 0 L10.5 3 L8 6 Z" fill="#000"/></svg>
<div class="a m" style="left:691px;top:132px;width:216px;height:267px;overflow:hidden">
<div class="a" style="left:49px;top:41px;width:112px;height:11px;background:#e9e9e9"></div>
<div class="row" style="top:6px;left:7px;color:#000">RAX</div>
<div class="a" style="top:15px;left:7px;width:21px;height:2px;background:#3a9a20"></div>
<div class="row" style="top:6px;left:50px;color:#000">0000000140081760</div>
<div class="row" style="top:6px;left:196px">&lt;fl</div>
<div class="row" style="top:18px;left:7px;color:#000">RBX</div>
<div class="row" style="top:18px;left:50px;color:#000">000000000014A678</div>
<div class="row" style="top:30px;left:7px;color:#008000">RCX</div>
<div class="a" style="top:39px;left:7px;width:21px;height:2px;background:#6a8a10"></div>
<div class="row" style="top:30px;left:50px;color:#000">000000000014FDB0</div>
<div class="row" style="top:42px;left:7px;color:#008000">RDX</div>
<div class="a" style="top:51px;left:7px;width:21px;height:2px;background:#6a8a10"></div>
<div class="row" style="top:42px;left:50px;color:#ff0000">0000000000000435</div>
<div class="row" style="top:42px;left:196px">L'e</div>
<div class="row" style="top:54px;left:7px;color:#000">RBP</div>
<div class="row" style="top:54px;left:50px;color:#000">0000000000149B60</div>
<div class="row" style="top:54px;left:196px">&amp;"t</div>
<div class="row" style="top:66px;left:7px;color:#000">RSP</div>
<div class="a" style="top:75px;left:7px;width:21px;height:2px;background:#3a9a20"></div>
<div class="row" style="top:66px;left:50px;color:#000">0000000000149AE0</div>
<div class="row" style="top:78px;left:7px;color:#000">RSI</div>
<div class="row" style="top:78px;left:50px;color:#ff0000">0000000000000002</div>
<div class="row" style="top:90px;left:7px;color:#000">RDI</div>
<div class="row" style="top:90px;left:50px;color:#000">000000000014AA70</div>
<div class="row" style="top:114px;left:7px;color:#008000">R8</div>
<div class="a" style="top:123px;left:7px;width:14px;height:2px;background:#6a8a10"></div>
<div class="row" style="top:114px;left:50px;color:#ff0000">64ED705730BC6591</div>
<div class="row" style="top:126px;left:7px;color:#008000">R9</div>
<div class="a" style="top:135px;left:7px;width:14px;height:2px;background:#6a8a10"></div>
<div class="row" style="top:126px;left:50px;color:#ff0000">0000000000000035</div>
<div class="row" style="top:126px;left:196px">'5'</div>
<div class="row" style="top:138px;left:7px;color:#000">R10</div>
<div class="a" style="top:147px;left:7px;width:21px;height:2px;background:#c02020"></div>
<div class="row" style="top:138px;left:50px;color:#ff0000">0000000000000435</div>
<div class="row" style="top:138px;left:196px">L'e</div>
<div class="row" style="top:150px;left:7px;color:#000">R11</div>
<div class="a" style="top:159px;left:7px;width:21px;height:2px;background:#c02020"></div>
<div class="row" style="top:150px;left:50px;color:#ff0000">00000000FFFFFFFF</div>
<div class="row" style="top:162px;left:7px;color:#000">R12</div>
<div class="row" style="top:162px;left:50px;color:#000">000000000014A738</div>
<div class="row" style="top:174px;left:7px;color:#000">R13</div>
<div class="row" style="top:174px;left:50px;color:#000">000000000014A588</div>
<div class="row" style="top:186px;left:7px;color:#000">R14</div>
<div class="row" style="top:186px;left:50px;color:#000">000000000014A558</div>
<div class="row" style="top:186px;left:196px">" ъ</div>
<div class="row" style="top:198px;left:7px;color:#000">R15</div>
<div class="row" style="top:198px;left:50px;color:#000">000000000014AA58</div>
<div class="row" style="top:222px;left:7px;color:#000">RIP</div>
<div class="row" style="top:222px;left:50px;color:#ff0000">0000000140016766</div>
<div class="row" style="top:222px;left:196px">fla</div>
<div class="row" style="top:246px;left:7px">RFLAGS   0000000000000315</div>
<div class="row" style="top:258px;left:7px">ZF 0  PF 1  AF 1</div>
</div>
<div class="a" style="left:907px;top:132px;width:16px;height:267px;background:#f0f0f0"></div>
<div class="a" style="left:908px;top:148px;width:14px;height:57px;background:#cdcdcd"></div>
<svg class="a" style="left:910px;top:137px" width="10" height="8"><path d="M1 6 L5 2 L9 6" fill="none" stroke="#606060" stroke-width="1.6"/></svg>
<svg class="a" style="left:910px;top:386px" width="10" height="8"><path d="M1 2 L5 6 L9 2" fill="none" stroke="#606060" stroke-width="1.6"/></svg>
<div class="a" style="left:691px;top:399px;width:231px;height:16px;background:#f0f0f0"></div>
<div class="a" style="left:707px;top:400px;width:38px;height:14px;background:#cdcdcd"></div>
<svg class="a" style="left:696px;top:402px" width="8" height="10"><path d="M6 1 L2 5 L6 9" fill="none" stroke="#606060" stroke-width="1.6"/></svg>
<svg class="a" style="left:909px;top:402px" width="8" height="10"><path d="M2 1 L6 5 L2 9" fill="none" stroke="#606060" stroke-width="1.6"/></svg>
<div class="a" style="left:891px;top:399px;width:31px;height:16px;background:#f0f0f0"></div>
<svg class="a" style="left:894px;top:402px" width="8" height="10"><path d="M2 1 L6 5 L2 9" fill="none" stroke="#606060" stroke-width="1.6"/></svg>
<div class="a" style="left:691px;top:418px;width:125px;height:19px;background:#e5e5e5;border:1px solid #c8c8c8"></div>
<div class="a u" style="left:694px;top:421px">Default (x64 fastcall)</div>
<svg class="a" style="left:801px;top:424px" width="10" height="7"><path d="M1 1 L5 5 L9 1" fill="none" stroke="#555" stroke-width="1"/></svg>
<div class="a" style="left:820px;top:418px;width:35px;height:19px;background:#fff;border:1px solid #a8a8a8"></div>
<div class="a u" style="left:823px;top:421px">2</div>
<div class="a" style="left:839px;top:419px;width:15px;height:17px;background:#f0f0f0;border-left:1px solid #ccc"></div>
<svg class="a" style="left:841px;top:420px" width="10" height="15"><path d="M2 5 L5 2 L8 5 Z M2 10 L5 13 L8 10 Z" fill="#222"/></svg>
<div class="a" style="left:858px;top:420px;width:13px;height:13px;background:#fff;border:1px solid #333"></div>
<div class="a u" style="left:875px;top:421px">Unlocked</div>
<div class="a" style="left:691px;top:448px;width:216px;height:11px;background:#c0c0c0"></div>
<div class="a m" style="left:691px;top:438px;width:216px;height:68px;overflow:hidden">
<div class="row" style="top:1px;left:5px">1: rcx 000000000014FDB0 000000</div>
<div class="row" style="top:12px;left:5px">2: rdx 0000000000000435 000000</div>
</div>
<div class="a" style="left:907px;top:438px;width:16px;height:68px;background:#f0f0f0"></div>
<svg class="a" style="left:910px;top:443px" width="10" height="8"><path d="M1 6 L5 2 L9 6" fill="none" stroke="#c0c0c0" stroke-width="1.6"/></svg>
<svg class="a" style="left:910px;top:492px" width="10" height="8"><path d="M1 2 L5 6 L9 2" fill="none" stroke="#c0c0c0" stroke-width="1.6"/></svg>
<div class="a m" style="left:16px;top:460px">rax=&lt;flareauthenticator.magic_function&gt;</div>
<div class="a m" style="left:16px;top:493px">.text:0000000140016766 flareauthenticator.exe:$16766 #15B66</div>
<div class="a" style="left:11px;top:534px;width:413px;height:14px;background:#c0c0c0;border-bottom:1px solid #8c939b"></div>
<div class="a" style="left:130px;top:534px;width:2px;height:14px;background:#808080"></div>
<div class="a m" style="left:16px;top:537px">Address</div>
<div class="a m" style="left:136px;top:537px">Hex</div>
<div class="a" style="left:131px;top:549px;width:1px;height:87px;background:#808080"></div>
<div class="a" style="left:217px;top:549px;width:1px;height:87px;background:#808080"></div>
<div class="a" style="left:301px;top:549px;width:1px;height:87px;background:#808080"></div>
<div class="a" style="left:385px;top:549px;width:1px;height:87px;background:#808080"></div>
<div class="a" style="left:133px;top:549px;width:21px;height:11px;background:#c0c0c0"></div>
<div class="a m" style="left:12px;top:549px;width:412px;height:85px;overflow:hidden">
<div class="row" style="top:1px;left:4px;color:#000">00007FFA890B1000</div>
<div class="row" style="top:1px;left:124px;color:#000">CC</div>
<div class="row" style="top:1px;left:145px;color:#000">CC</div>
<div class="row" style="top:1px;left:166px;color:#000">CC</div>
<div class="row" style="top:1px;left:187px;color:#000">CC</div>
<div class="row" style="top:1px;left:208px;color:#000">CC</div>
<div class="row" style="top:1px;left:229px;color:#000">CC</div>
<div class="row" style="top:1px;left:250px;color:#000">CC</div>
<div class="row" style="top:1px;left:271px;color:#000">CC</div>
<div class="row" style="top:1px;left:292px;color:#000">CC</div>
<div class="row" style="top:1px;left:313px;color:#000">CC</div>
<div class="row" style="top:1px;left:334px;color:#000">CC</div>
<div class="row" style="top:1px;left:355px;color:#000">CC</div>
<div class="row" style="top:1px;left:376px;color:#000">CC</div>
<div class="row" style="top:1px;left:397px;color:#000">CC</div>
<div class="row" style="top:12px;left:4px;color:#ff0000">00007FFA890B1010</div>
<div class="row" style="top:12px;left:124px;color:#9a30a8">48</div>
<div class="row" style="top:12px;left:145px;color:#000">89</div>
<div class="row" style="top:12px;left:166px;color:#9a30a8">5C</div>
<div class="row" style="top:12px;left:187px;color:#9a30a8">24</div>
<div class="row" style="top:12px;left:208px;color:#000">10</div>
<div class="row" style="top:12px;left:229px;color:#9a30a8">48</div>
<div class="row" style="top:12px;left:250px;color:#000">89</div>
<div class="row" style="top:12px;left:271px;color:#9a30a8">74</div>
<div class="row" style="top:12px;left:292px;color:#9a30a8">24</div>
<div class="row" style="top:12px;left:313px;color:#000">18</div>
<div class="row" style="top:12px;left:334px;color:#9a30a8">57</div>
<div class="row" style="top:12px;left:355px;color:#9a30a8">41</div>
<div class="row" style="top:12px;left:376px;color:#9a30a8">56</div>
<div class="row" style="top:12px;left:397px;color:#9a30a8">41</div>
<div class="row" style="top:23px;left:4px;color:#000">00007FFA890B1020</div>
<div class="row" style="top:23px;left:124px;color:#000">81</div>
<div class="row" style="top:23px;left:145px;color:#000">EC</div>
<div class="row" style="top:23px;left:166px;color:#000">80</div>
<div class="row" style="top:23px;left:187px;color:#58a000">00</div>
<div class="row" style="top:23px;left:208px;color:#58a000">00</div>
<div class="row" style="top:23px;left:229px;color:#58a000">00</div>
<div class="row" style="top:23px;left:250px;color:#9a30a8">48</div>
<div class="row" style="top:23px;left:271px;color:#000">8B</div>
<div class="row" style="top:23px;left:292px;color:#000">05</div>
<div class="row" style="top:23px;left:313px;color:#000">E3</div>
<div class="row" style="top:23px;left:334px;color:#9a30a8">34</div>
<div class="row" style="top:23px;left:355px;color:#000">18</div>
<div class="row" style="top:23px;left:376px;color:#58a000">00</div>
<div class="row" style="top:23px;left:397px;color:#9a30a8">48</div>
<div class="row" style="top:34px;left:4px;color:#000">00007FFA890B1030</div>
<div class="row" style="top:34px;left:124px;color:#9a30a8">48</div>
<div class="row" style="top:34px;left:145px;color:#000">89</div>
<div class="row" style="top:34px;left:166px;color:#9a30a8">44</div>
<div class="row" style="top:34px;left:187px;color:#9a30a8">24</div>
<div class="row" style="top:34px;left:208px;color:#9a30a8">70</div>
<div class="row" style="top:34px;left:229px;color:#9a30a8">4D</div>
<div class="row" style="top:34px;left:250px;color:#000">8B</div>
<div class="row" style="top:34px;left:271px;color:#000">F9</div>
<div class="row" style="top:34px;left:292px;color:#9a30a8">41</div>
<div class="row" style="top:34px;left:313px;color:#000">8B</div>
<div class="row" style="top:34px;left:334px;color:#000">F8</div>
<div class="row" style="top:34px;left:355px;color:#9a30a8">48</div>
<div class="row" style="top:34px;left:376px;color:#000">8B</div>
<div class="row" style="top:34px;left:397px;color:#000">C1</div>
<div class="row" style="top:45px;left:4px;color:#000">00007FFA890B1040</div>
<div class="row" style="top:45px;left:124px;color:#000">0F</div>
<div class="row" style="top:45px;left:145px;color:#000">84</div>
<div class="row" style="top:45px;left:166px;color:#9a30a8">31</div>
<div class="row" style="top:45px;left:187px;color:#9a30a8">6B</div>
<div class="row" style="top:45px;left:208px;color:#9a30a8">0A</div>
<div class="row" style="top:45px;left:229px;color:#58a000">00</div>
<div class="row" style="top:45px;left:250px;color:#000">83</div>
<div class="row" style="top:45px;left:271px;color:#000">FA</div>
<div class="row" style="top:45px;left:292px;color:#9a30a8">0A</div>
<div class="row" style="top:45px;left:313px;color:#000">0F</div>
<div class="row" style="top:45px;left:334px;color:#000">85</div>
<div class="row" style="top:45px;left:355px;color:#000">E5</div>
<div class="row" style="top:45px;left:376px;color:#9a30a8">6A</div>
<div class="row" style="top:45px;left:397px;color:#9a30a8">0A</div>
<div class="row" style="top:56px;left:4px;color:#000">00007FFA890B1050</div>
<div class="row" style="top:56px;left:124px;color:#9a30a8">33</div>
<div class="row" style="top:56px;left:145px;color:#000">C9</div>
<div class="row" style="top:56px;left:166px;color:#9a30a8">45</div>
<div class="row" style="top:56px;left:187px;color:#9a30a8">33</div>
<div class="row" style="top:56px;left:208px;color:#000">D2</div>
<div class="row" style="top:56px;left:229px;color:#9a30a8">4C</div>
<div class="row" style="top:56px;left:250px;color:#000">8D</div>
<div class="row" style="top:56px;left:271px;color:#9a30a8">74</div>
<div class="row" style="top:56px;left:292px;color:#9a30a8">24</div>
<div class="row" style="top:56px;left:313px;color:#9a30a8">61</div>
<div class="row" style="top:56px;left:334px;color:#9a30a8">48</div>
<div class="row" style="top:56px;left:355px;color:#000">8B</div>
<div class="row" style="top:56px;left:376px;color:#58a000">00</div>
<div class="row" style="top:56px;left:397px;color:#9a30a8">4C</div>
<div class="row" style="top:67px;left:4px;color:#000">00007FFA890B1060</div>
<div class="row" style="top:67px;left:124px;color:#000">94</div>
<div class="row" style="top:67px;left:145px;color:#9a30a8">5B</div>
<div class="row" style="top:67px;left:166px;color:#000">12</div>
<div class="row" style="top:67px;left:187px;color:#58a000">00</div>
<div class="row" style="top:67px;left:208px;color:#9a30a8">45</div>
<div class="row" style="top:67px;left:229px;color:#000">85</div>
<div class="row" style="top:67px;left:250px;color:#000">C9</div>
<div class="row" style="top:67px;left:271px;color:#000">0F</div>
<div class="row" style="top:67px;left:292px;color:#000">85</div>
<div class="row" style="top:67px;left:313px;color:#000">14</div>
<div class="row" style="top:67px;left:334px;color:#9a30a8">6B</div>
<div class="row" style="top:67px;left:355px;color:#9a30a8">0A</div>
<div class="row" style="top:67px;left:376px;color:#58a000">00</div>
<div class="row" style="top:67px;left:397px;color:#9a30a8">44</div>
<div class="row" style="top:78px;left:4px;color:#000">00007FFA890B1070</div>
<div class="row" style="top:78px;left:124px;color:#9a30a8">33</div>
<div class="row" style="top:78px;left:145px;color:#000">D2</div>
<div class="row" style="top:78px;left:166px;color:#9a30a8">49</div>
<div class="row" style="top:78px;left:187px;color:#000">F7</div>
<div class="row" style="top:78px;left:208px;color:#000">F0</div>
<div class="row" style="top:78px;left:229px;color:#9a30a8">49</div>
<div class="row" style="top:78px;left:250px;color:#d00000">FF</div>
<div class="row" style="top:78px;left:271px;color:#000">CF</div>
<div class="row" style="top:78px;left:292px;color:#000">8B</div>
<div class="row" style="top:78px;left:313px;color:#000">CA</div>
<div class="row" style="top:78px;left:334px;color:#9a30a8">42</div>
<div class="row" style="top:78px;left:355px;color:#000">8A</div>
<div class="row" style="top:78px;left:376px;color:#000">0C</div>
<div class="row" style="top:78px;left:397px;color:#000">19</div>
</div>
<div class="a" style="left:424px;top:534px;width:16px;height:100px;background:#f0f0f0"></div>
<div class="a" style="left:425px;top:551px;width:14px;height:18px;background:#cdcdcd"></div>
<svg class="a" style="left:427px;top:539px" width="10" height="8"><path d="M1 6 L5 2 L9 6" fill="none" stroke="#606060" stroke-width="1.6"/></svg>
<svg class="a" style="left:427px;top:621px" width="10" height="8"><path d="M1 2 L5 6 L9 2" fill="none" stroke="#606060" stroke-width="1.6"/></svg>
<div class="a" style="left:12px;top:634px;width:412px;height:16px;background:#f0f0f0"></div>
<div class="a" style="left:29px;top:635px;width:286px;height:14px;background:#cdcdcd"></div>
<svg class="a" style="left:17px;top:637px" width="8" height="10"><path d="M6 1 L2 5 L6 9" fill="none" stroke="#606060" stroke-width="1.6"/></svg>
<svg class="a" style="left:411px;top:637px" width="8" height="10"><path d="M2 1 L6 5 L2 9" fill="none" stroke="#606060" stroke-width="1.6"/></svg>
<div class="a" style="left:424px;top:634px;width:17px;height:16px;background:#f0f0f0"></div>
<div class="a" style="left:566px;top:510px;width:341px;height:11px;background:#c0c0c0"></div>
<div class="a" style="left:445px;top:510px;width:120px;height:11px;background:#000"></div>
<div class="a" style="left:565px;top:510px;width:1px;height:124px;background:#808080"></div>
<div class="a" style="left:686px;top:510px;width:1px;height:124px;background:#808080"></div>
<div class="a m" style="left:444px;top:510px;width:463px;height:124px;overflow:hidden">
<div class="row" style="top:1px;left:4px;color:#fff">0000000000149AE0</div>
<div class="row" style="top:1px;left:126px">0000000000000000</div>
<div class="row" style="top:12px;left:4px;color:#808080">0000000000149AE8</div>
<div class="row" style="top:12px;left:126px">00007FFA891A95DB</div>
<div class="row" style="top:12px;left:247px;color:#ff0000">return to ntdll.RtlRegisterSecu</div>
<div class="row" style="top:23px;left:4px;color:#808080">0000000000149AF0</div>
<div class="row" style="top:23px;left:126px">0000000000440000</div>
<div class="row" style="top:34px;left:4px;color:#808080">0000000000149AF8</div>
<div class="row" style="top:34px;left:126px">0000000000440000</div>
<div class="row" style="top:45px;left:4px;color:#808080">0000000000149B00</div>
<div class="row" style="top:45px;left:126px">0000000000440000</div>
<div class="row" style="top:56px;left:4px;color:#808080">0000000000149B08</div>
<div class="row" style="top:56px;left:126px">0000000050000063</div>
<div class="row" style="top:67px;left:4px;color:#808080">0000000000149B10</div>
<div class="row" style="top:67px;left:126px">0000000100000001</div>
<div class="row" style="top:78px;left:4px;color:#808080">0000000000149B18</div>
<div class="row" style="top:78px;left:126px">0000000004984200</div>
<div class="row" style="top:78px;left:247px;color:#000">"оюоюоюоюоюоюоюоюоюоюоюоюоюоюоюоюоюоюоюою</div>
<div class="row" style="top:89px;left:4px;color:#808080">0000000000149B20</div>
<div class="row" style="top:89px;left:126px">0000000004984200</div>
<div class="row" style="top:89px;left:247px;color:#000">"оюоюоюоюоюоюоюоюоюоюоюоюоюоюоюоюоюоюоюою</div>
<div class="row" style="top:100px;left:4px;color:#808080">0000000000149B28</div>
<div class="row" style="top:100px;left:126px">0000000004984200</div>
<div class="row" style="top:100px;left:247px;color:#000">"оюоюоюоюоюоюоюоюоюоюоюоюоюоюоюоюоюоюоюою</div>
<div class="row" style="top:111px;left:4px;color:#808080">0000000000149B30</div>
<div class="row" style="top:111px;left:126px">0000000040000062</div>
<div class="row" style="top:122px;left:4px;color:#808080">0000000000149B38</div>
<div class="row" style="top:122px;left:126px">0000000000440000</div>
</div>
<div class="a" style="left:907px;top:511px;width:16px;height:123px;background:#f0f0f0"></div>
<div class="a" style="left:908px;top:582px;width:14px;height:18px;background:#cdcdcd"></div>
<svg class="a" style="left:910px;top:516px" width="10" height="8"><path d="M1 6 L5 2 L9 6" fill="none" stroke="#606060" stroke-width="1.6"/></svg>
<svg class="a" style="left:910px;top:621px" width="10" height="8"><path d="M1 2 L5 6 L9 2" fill="none" stroke="#606060" stroke-width="1.6"/></svg>
<div class="a" style="left:444px;top:634px;width:478px;height:16px;background:#f0f0f0"></div>
<div class="a" style="left:461px;top:635px;width:114px;height:14px;background:#cdcdcd"></div>
<svg class="a" style="left:449px;top:637px" width="8" height="10"><path d="M6 1 L2 5 L6 9" fill="none" stroke="#606060" stroke-width="1.6"/></svg>
<svg class="a" style="left:909px;top:637px" width="8" height="10"><path d="M2 1 L6 5 L2 9" fill="none" stroke="#606060" stroke-width="1.6"/></svg>
<div class="a" style="left:891px;top:634px;width:31px;height:16px;background:#f0f0f0"></div>
<svg class="a" style="left:894px;top:637px" width="8" height="10"><path d="M2 1 L6 5 L2 9" fill="none" stroke="#606060" stroke-width="1.6"/></svg>
<div class="a u" style="left:13px;top:659px">Command:</div>
<div class="a" style="left:67px;top:654px;width:782px;height:20px;background:#fff;border:1px solid #8c939b;border-bottom-color:#808080"></div>
<div class="a" style="left:849px;top:654px;width:73px;height:20px;background:#e5e5e5;border:1px solid #c8c8c8"></div>
<div class="a u" style="left:852px;top:659px">Default</div>
<svg class="a" style="left:908px;top:662px" width="10" height="7"><path d="M1 1 L5 5 L9 1" fill="none" stroke="#555" stroke-width="1"/></svg>
<div class="a" style="left:11px;top:676px;width:913px;height:23px;background:#d3d3d3;border-bottom:1px solid #ececec"></div>
<div class="a" style="left:13px;top:679px;width:64px;height:18px;background:#c6c6c6;border-top:1px solid #8a8a8a;border-left:1px solid #8a8a8a;border-bottom:1px solid #f2f2f2;border-right:1px solid #f2f2f2"></div>
<div class="a u" style="left:25px;top:682px">Running</div>
<div class="a" style="left:83px;top:679px;width:650px;height:18px;background:#c6c6c6;border-top:1px solid #8a8a8a;border-left:1px solid #8a8a8a;border-bottom:1px solid #f2f2f2;border-right:1px solid #f2f2f2"></div>
<div class="a u" style="left:87px;top:682px">INT3 breakpoint at flareauthenticator.<span style="color:#0000ee;text-decoration:underline">0000000140016766</span>!</div>
<div class="a" style="left:739px;top:679px;width:184px;height:18px;background:#c6c6c6;border-top:1px solid #8a8a8a;border-left:1px solid #8a8a8a;border-bottom:1px solid #f2f2f2;border-right:1px solid #f2f2f2"></div>
<div class="a u" style="left:742px;top:682px">Time Wasted Debugging: 0:10:37:24</div>
<div class="a" style="left:966px;top:54px;width:240px;height:607px;background:#2d2d2d;box-shadow:0 0 0 1px rgba(10,40,90,0.6),0 2px 10px rgba(0,0,0,0.35)"></div>
<div class="a" style="left:966px;top:54px;width:240px;height:30px;background:#fff"></div>
<div class="a u" style="left:995px;top:62px;font-size:11.6px">FlareAuthe...</div>
<svg class="a" style="left:975px;top:59px" width="15" height="18" viewBox="0 0 15 18"><path d="M7 1.5 L12.8 12.5" stroke="#1aa0e6" stroke-width="2" fill="none"/><path d="M7 1.5 L3.5 8.5" stroke="#1aa0e6" stroke-width="2.4" fill="none"/><path d="M5.5 7.5 L1 13 H5 L2 17 L8.5 11.5 H4.8 Z" fill="#1aa0e6"/></svg>
<div class="a" style="left:1087px;top:68px;width:10px;height:1px;background:#000"></div>
<div class="a" style="left:1132px;top:63px;width:10px;height:10px;border:1px solid #bbb"></div>
<svg class="a" style="left:1177px;top:63px" width="12" height="12"><path d="M1 1 L11 11 M11 1 L1 11" stroke="#000" stroke-width="1.1"/></svg>
<div class="a" style="left:966px;top:106px;width:240px;text-align:center;font:bold 24px 'Liberation Sans';color:#18a0e6;line-height:32px"><span style="display:inline-block;transform:scaleX(0.88)">FLARE</span><br>Authenticator</div>
<div class="a" style="left:986px;top:188px;width:35px;height:35px;background:#4a4a4a;border:2px solid #14a4ec;border-radius:7px"></div>
<div class="a" style="left:1026px;top:188px;width:35px;height:35px;background:#4a4a4a;border:2px solid #14a4ec;border-radius:7px"></div>
<div class="a" style="left:1066px;top:188px;width:35px;height:35px;background:#4a4a4a;border:2px solid #14a4ec;border-radius:7px"></div>
<div class="a" style="left:1106px;top:188px;width:35px;height:35px;background:#4a4a4a;border:2px solid #14a4ec;border-radius:7px"></div>
<div class="a" style="left:1146px;top:188px;width:35px;height:35px;background:#4a4a4a;border:2px solid #14a4ec;border-radius:7px"></div>
<div class="a" style="left:986px;top:228px;width:35px;height:35px;background:#4a4a4a;border:2px solid #14a4ec;border-radius:7px"></div>
<div class="a" style="left:1026px;top:228px;width:35px;height:35px;background:#4a4a4a;border:2px solid #14a4ec;border-radius:7px"></div>
<div class="a" style="left:1066px;top:228px;width:35px;height:35px;background:#4a4a4a;border:2px solid #14a4ec;border-radius:7px"></div>
<div class="a" style="left:1106px;top:228px;width:35px;height:35px;background:#4a4a4a;border:2px solid #14a4ec;border-radius:7px"></div>
<div class="a" style="left:1146px;top:228px;width:35px;height:35px;background:#4a4a4a;border:2px solid #14a4ec;border-radius:7px"></div>
<div class="a" style="left:986px;top:268px;width:35px;height:35px;background:#4a4a4a;border:2px solid #14a4ec;border-radius:7px"></div>
<div class="a" style="left:1026px;top:268px;width:35px;height:35px;background:#4a4a4a;border:2px solid #14a4ec;border-radius:7px"></div>
<div class="a" style="left:1066px;top:268px;width:35px;height:35px;background:#4a4a4a;border:2px solid #14a4ec;border-radius:7px"></div>
<div class="a" style="left:1106px;top:268px;width:35px;height:35px;background:#4a4a4a;border:2px solid #14a4ec;border-radius:7px"></div>
<div class="a" style="left:1146px;top:268px;width:35px;height:35px;background:#4a4a4a;border:2px solid #14a4ec;border-radius:7px"></div>
<div class="a" style="left:986px;top:308px;width:35px;height:35px;background:#4a4a4a;border:2px solid #14a4ec;border-radius:7px"></div>
<div class="a" style="left:1026px;top:308px;width:35px;height:35px;background:#4a4a4a;border:2px solid #14a4ec;border-radius:7px"></div>
<div class="a" style="left:1066px;top:308px;width:35px;height:35px;background:#4a4a4a;border:2px solid #14a4ec;border-radius:7px"></div>
<div class="a" style="left:1106px;top:308px;width:35px;height:35px;background:#4a4a4a;border:2px solid #14a4ec;border-radius:7px"></div>
<div class="a" style="left:1146px;top:308px;width:35px;height:35px;background:#4a4a4a;border:2px solid #14a4ec;border-radius:7px"></div>
<div class="a" style="left:986px;top:348px;width:35px;height:35px;background:#4a4a4a;border:2px solid #14a4ec;border-radius:7px"></div>
<div class="a" style="left:1026px;top:348px;width:35px;height:35px;background:#4a4a4a;border:2px solid #14a4ec;border-radius:7px"></div>
<div class="a" style="left:1066px;top:348px;width:35px;height:35px;background:#4a4a4a;border:2px solid #14a4ec;border-radius:7px"></div>
<div class="a" style="left:1106px;top:348px;width:35px;height:35px;background:#4a4a4a;border:2px solid #14a4ec;border-radius:7px"></div>
<div class="a" style="left:1146px;top:348px;width:35px;height:35px;background:#4a4a4a;border:2px solid #14a4ec;border-radius:7px"></div>
<div class="a" style="left:986px;top:403px;width:60px;height:60px;border-radius:50%;background:#474747;color:#fff;font:bold 18px 'Liberation Sans';text-align:center;line-height:66px">1</div>
<div class="a" style="left:1056px;top:403px;width:60px;height:60px;border-radius:50%;background:#474747;color:#fff;font:bold 18px 'Liberation Sans';text-align:center;line-height:66px">2</div>
<div class="a" style="left:1126px;top:403px;width:60px;height:60px;border-radius:50%;background:#474747;color:#fff;font:bold 18px 'Liberation Sans';text-align:center;line-height:66px">3</div>
<div class="a" style="left:986px;top:465px;width:60px;height:60px;border-radius:50%;background:#474747;color:#fff;font:bold 18px 'Liberation Sans';text-align:center;line-height:66px">4</div>
<div class="a" style="left:1056px;top:465px;width:60px;height:60px;border-radius:50%;background:#474747;color:#fff;font:bold 18px 'Liberation Sans';text-align:center;line-height:66px">5</div>
<div class="a" style="left:1126px;top:465px;width:60px;height:60px;border-radius:50%;background:#474747;color:#fff;font:bold 18px 'Liberation Sans';text-align:center;line-height:66px">6</div>
<div class="a" style="left:986px;top:527px;width:60px;height:60px;border-radius:50%;background:#474747;color:#fff;font:bold 18px 'Liberation Sans';text-align:center;line-height:66px">7</div>
<div class="a" style="left:1056px;top:527px;width:60px;height:60px;border-radius:50%;background:#474747;color:#fff;font:bold 18px 'Liberation Sans';text-align:center;line-height:66px">8</div>
<div class="a" style="left:1126px;top:527px;width:60px;height:60px;border-radius:50%;background:#474747;color:#fff;font:bold 18px 'Liberation Sans';text-align:center;line-height:66px">9</div>
<div class="a" style="left:986px;top:589px;width:60px;height:60px;border-radius:50%;background:#3a3a3a;color:#747474;font:bold 18px 'Liberation Sans';text-align:center;line-height:66px">DEL</div>
<div class="a" style="left:1056px;top:589px;width:60px;height:60px;border-radius:50%;background:#474747;color:#fff;font:bold 18px 'Liberation Sans';text-align:center;line-height:66px">0</div>
<div class="a" style="left:1126px;top:589px;width:60px;height:60px;border-radius:50%;background:#3a3a3a;color:#747474;font:bold 18px 'Liberation Sans';text-align:center;line-height:66px">OK</div>
</body></html>
